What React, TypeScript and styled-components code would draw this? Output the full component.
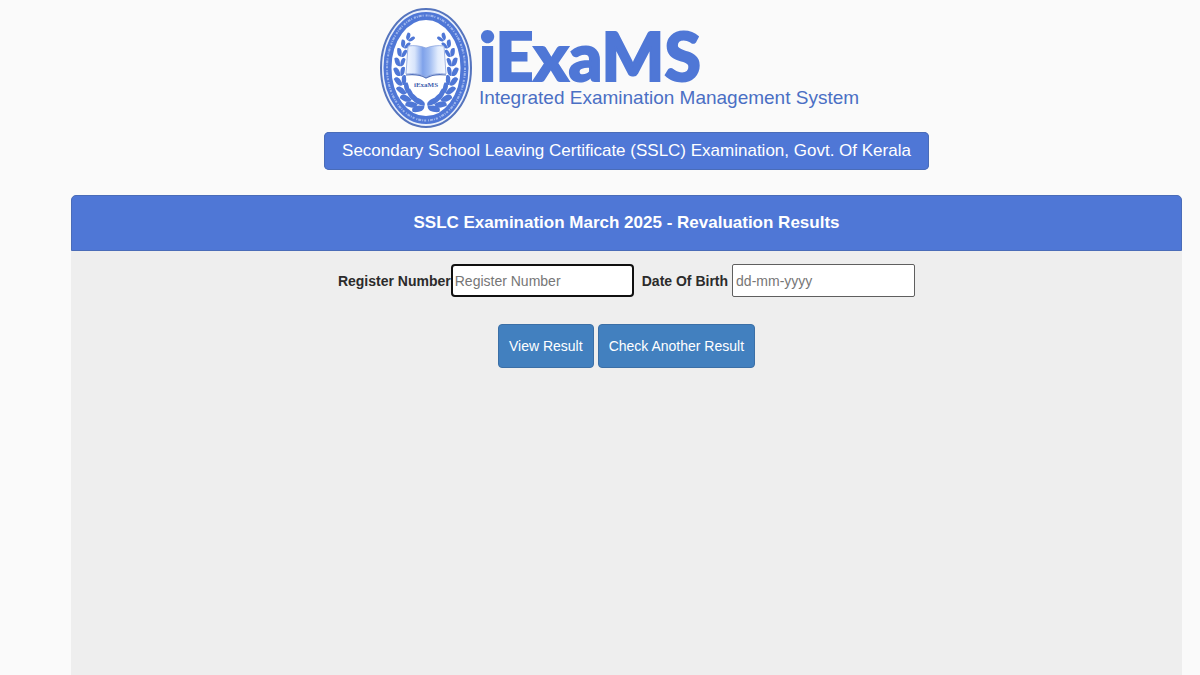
import React from "react";
import styled, { createGlobalStyle } from "styled-components";

const GlobalStyle = createGlobalStyle`
  *, *::before, *::after { box-sizing: border-box; }
  body {
    margin: 0;
    background: #fafafa;
    color: #2b2b2b;
    font-family: "Liberation Sans", Arial, sans-serif;
    font-size: 14px;
    line-height: 24px;
  }
`;

const Page = styled.div`
  min-height: 100vh;
  display: flex;
  flex-direction: column;
  padding: 8px 18px 0 71px;
`;

const Header = styled.header`
  display: flex;
  flex-direction: column;
  align-items: center;
  gap: 4px;
  margin-bottom: 25px;
`;

const Brand = styled.div`
  display: flex;
  align-items: center;
  gap: 7px;
  margin-right: 14px;
`;

const EmblemSvg = styled.svg`
  display: block;
  width: 92px;
  height: 120px;
`;

const BrandText = styled.div`
  display: flex;
  flex-direction: column;
  color: #4f77d6;
`;

const Wordmark = styled.span`
  font-family: Lato, "Liberation Sans", sans-serif;
  font-size: 66px;
  font-weight: 900;
  line-height: 60px;
  -webkit-text-stroke: 2px #4f77d6;
`;

const Tagline = styled.span`
  font-size: 19px;
  line-height: 24px;
  color: #4a6fc4;
`;

const Banner = styled.h1`
  margin: 0;
  padding: 4px 18px;
  border-radius: 5px;
  background: #4f77d6;
  box-shadow: inset 0 0 0 1px #4a6cb8;
  color: #fff;
  font-size: 17px;
  font-weight: 400;
  line-height: 30px;
`;

const Panel = styled.main`
  flex: 1;
  border-radius: 5px 5px 0 0;
  background: #eeeeee;
`;

const PanelTitle = styled.h2`
  margin: 0;
  padding: 12px;
  border: 1px solid #4a6cb8;
  border-radius: 5px 5px 0 0;
  background: #4f77d6;
  color: #fff;
  font-size: 17px;
  font-weight: 700;
  line-height: 30px;
  text-align: center;
`;

const Form = styled.form`
  display: flex;
  flex-direction: column;
  align-items: center;
  gap: 27px;
  padding: 13px 0;
`;

const Fields = styled.div`
  display: flex;
  align-items: center;
  gap: 8px;
`;

const Field = styled.div<{ $gap: number }>`
  display: flex;
  align-items: center;
  gap: ${(p) => p.$gap}px;
`;

const Label = styled.label`
  font-weight: 700;
`;

const TextInput = styled.input<{ $active?: boolean }>`
  width: 183px;
  height: 33px;
  padding: 0 ${(p) => (p.$active ? 2 : 3)}px;
  border: ${(p) => (p.$active ? "2px solid #101010" : "1px solid #5f5f5f")};
  border-radius: ${(p) => (p.$active ? 4 : 2)}px;
  outline: none;
  background: #fff;
  color: #222;
  font: inherit;
  &::placeholder { color: #767676; opacity: 1; }
`;

const Actions = styled.div`
  display: flex;
  gap: 4px;
`;

const Button = styled.button`
  height: 44px;
  padding: 0 10px;
  border: 1px solid #3b6fa6;
  border-radius: 4px;
  background: #4280bf;
  color: #fff;
  font: inherit;
  cursor: pointer;
`;

const LEAF = "M-2 0C-3 -5 1 -8 8 -9C11 -5 8 0 -2 0Z";

function Wreath() {
  const count = 10;
  return (
    <>
      {Array.from({ length: count }, (_, i) => {
        const angle = ((98 + i * 14.5) * Math.PI) / 180;
        const x = 46 + 26 * Math.cos(angle);
        const y = 60 + 38 * Math.sin(angle);
        const heading =
          (Math.atan2(38 * Math.cos(angle), -26 * Math.sin(angle)) * 180) / Math.PI;
        const size = 1.02 - i * 0.045;
        return (
          <g key={i} transform={`translate(${x} ${y}) rotate(${heading}) scale(${size})`}>
            <path d={LEAF} transform="scale(1 0.9)" />
            <path d={LEAF} transform="scale(1 -0.75)" />
          </g>
        );
      })}
    </>
  );
}

function Emblem() {
  return (
    <EmblemSvg viewBox="0 0 92 120" role="img" aria-label="iExaMS emblem">
      <defs>
        <linearGradient id="pages">
          <stop offset="0" stopColor="#f4f8ff" />
          <stop offset="0.22" stopColor="#d7e4fb" />
          <stop offset="0.42" stopColor="#7fa2ea" />
          <stop offset="0.58" stopColor="#9dbaf1" />
          <stop offset="0.8" stopColor="#e2ecfd" />
          <stop offset="1" stopColor="#f6f9ff" />
        </linearGradient>
      </defs>
      <ellipse cx="46" cy="60" rx="45" ry="59" fill="#e9effb" stroke="#5574bd" strokeWidth="2" />
      <ellipse cx="46" cy="60" rx="38.5" ry="52" fill="#fff" stroke="#4f77d6" strokeWidth="8" />
      <ellipse
        cx="46"
        cy="60"
        rx="39"
        ry="52.5"
        fill="none"
        stroke="#9db5ec"
        strokeWidth="2"
        strokeDasharray="2 1 1 1 3 1 1 2"
      />
      <g fill="#4f77d6">
        <Wreath />
        <g transform="translate(92 0) scale(-1 1)">
          <Wreath />
        </g>
      </g>
      <path
        d="M28 38C34 37 41 38 46 40C51 38 58 37 64 38L66 66C59 65 51 66 46 69C41 66 34 65 26 66Z"
        fill="url(#pages)"
        stroke="#8ba4de"
        strokeWidth="0.8"
      />
      <path d="M26 67C34 66 41 67 46 70C51 67 59 66 66 67" fill="none" stroke="#5574bd" strokeWidth="1.2" />
      <text
        x="46"
        y="79"
        textAnchor="middle"
        fontFamily="Liberation Serif, serif"
        fontSize="7"
        fontWeight="700"
        fill="#3f5fae"
      >
        iExaMS
      </text>
    </EmblemSvg>
  );
}

export default function App() {
  return (
    <>
      <GlobalStyle />
      <Page>
        <Header>
          <Brand>
            <Emblem />
            <BrandText>
              <Wordmark>iExaMS</Wordmark>
              <Tagline>Integrated Examination Management System</Tagline>
            </BrandText>
          </Brand>
          <Banner>Secondary School Leaving Certificate (SSLC) Examination, Govt. Of Kerala</Banner>
        </Header>
        <Panel>
          <PanelTitle>SSLC Examination March 2025 - Revaluation Results</PanelTitle>
          <Form onSubmit={(e) => e.preventDefault()}>
            <Fields>
              <Field $gap={0}>
                <Label htmlFor="register-number">Register Number</Label>
                <TextInput id="register-number" type="text" placeholder="Register Number" $active />
              </Field>
              <Field $gap={4}>
                <Label htmlFor="birth-date">Date Of Birth</Label>
                <TextInput id="birth-date" type="text" placeholder="dd-mm-yyyy" />
              </Field>
            </Fields>
            <Actions>
              <Button type="submit">View Result</Button>
              <Button type="reset">Check Another Result</Button>
            </Actions>
          </Form>
        </Panel>
      </Page>
    </>
  );
}
